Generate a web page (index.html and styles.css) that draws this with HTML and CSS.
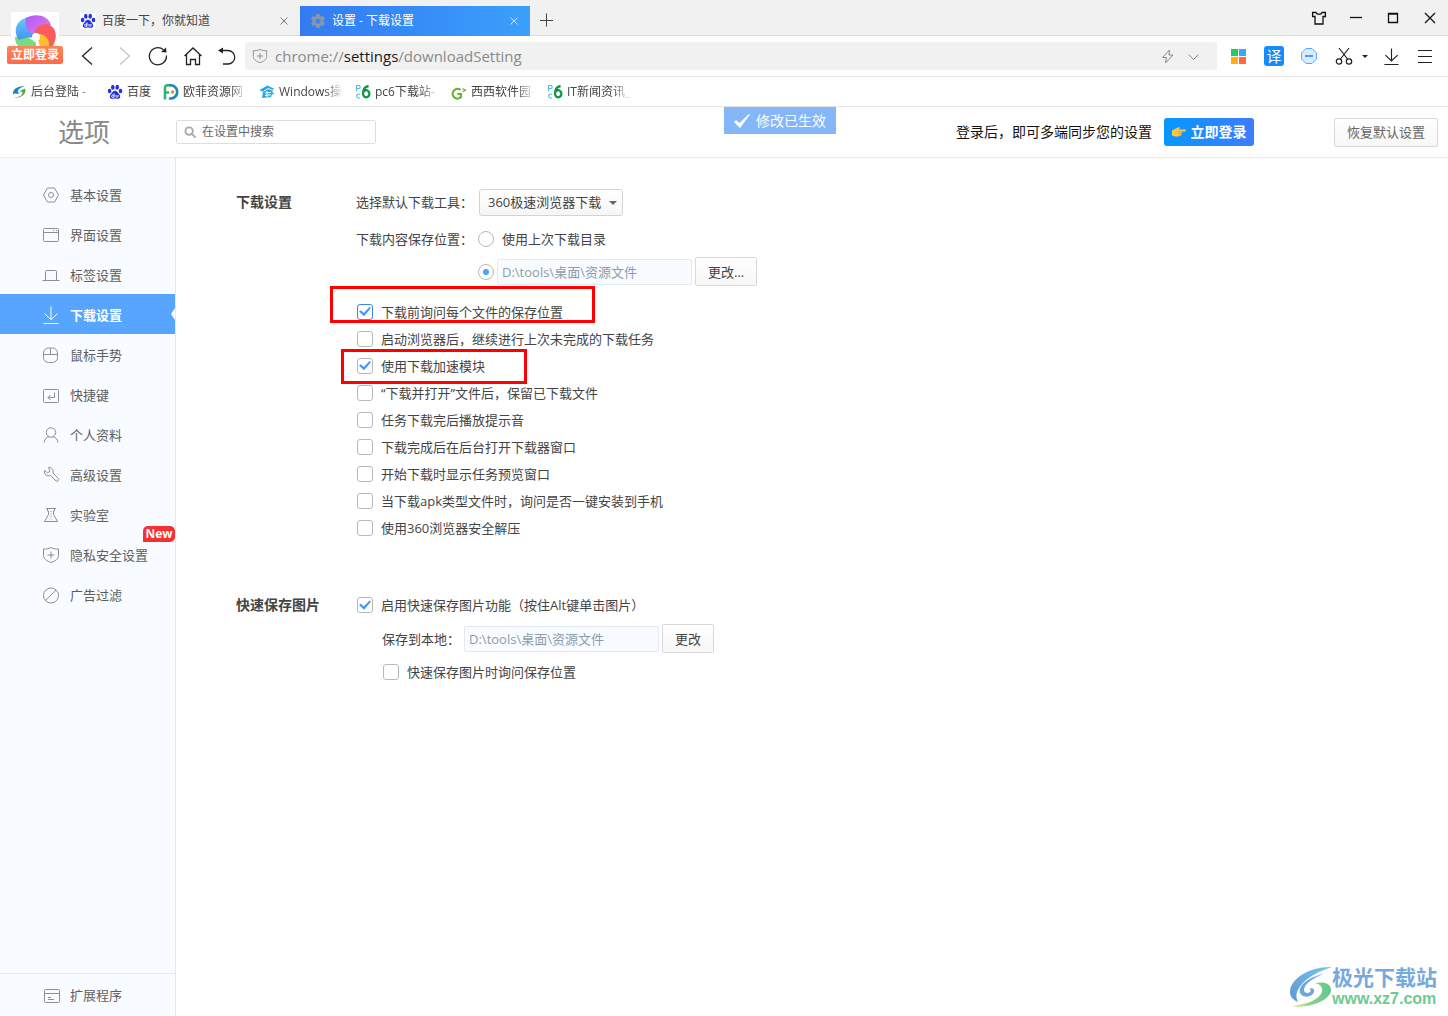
FILE: index.html
```html
<!DOCTYPE html>
<html lang="zh-CN">
<head>
<meta charset="utf-8">
<title>设置 - 下载设置</title>
<link rel="stylesheet" href="styles.css">
</head>
<body>
<svg class="sprite" aria-hidden="true">
  <symbol id="paw" viewBox="0 0 16 16">
    <g fill="#2433dc"><ellipse cx="2.6" cy="7" rx="1.8" ry="2.3"/><ellipse cx="5.8" cy="3.2" rx="1.8" ry="2.5"/><ellipse cx="10.2" cy="3.2" rx="1.8" ry="2.5" transform="rotate(8 10.2 3.2)"/><ellipse cx="13.5" cy="7" rx="1.8" ry="2.3"/><path d="M8 6.800c2 0 2.600 1.800 4 3.200 1.800 1.700 1.600 4.700-1 4.800-1.300 0-1.800-.3-3-.3s-1.700.3-3 .3c-2.600-.1-2.800-3.100-1-4.800C5.400 8.600 6 6.800 8 6.800z"/></g>
    <path d="M7 9.500v3.800M7 11.200H5.300c-.9 0-.9 2.100 0 2.100H7M9 11v1.600c0 .9 2 .9 2 0V11" fill="none" stroke="#fff"/>
  </symbol>
  <symbol id="pc6" viewBox="0 0 16 16">
    <path d="M1.500 7V1.500h2.200a1.500 1.500 0 0 1 0 3H1.500M5 10.600a2 2 0 1 0 0 3" fill="none" stroke="#4fb8e8" stroke-width="1.100"/>
    <path d="M13.600 2C10 2.600 8 5.500 8 10a3.200 3.500 0 1 0 .4-2" fill="none" stroke="#12983c" stroke-width="2.300"/>
  </symbol>
  <symbol id="shield" viewBox="0 0 18 18">
    <path d="M9 1.500c2 1.300 4.500 1.700 7.500 1.500v6.500c0 3.500-3.500 5.700-7.500 7-4-1.300-7.500-3.500-7.500-7V3C4.500 3.200 7 2.800 9 1.500zM5.500 9h7M9 5.500v7"/>
  </symbol>
  <symbol id="down" viewBox="0 0 18 18">
    <path d="M9 .5v13M2.500 7.500 9 13.700l6.500-6.200M1.500 17.500h15"/>
  </symbol>
</svg>

<header class="browser">
  <div class="tabstrip">
    <div class="tab">
      <svg class="favicon favicon-plate"><use href="#paw"/></svg>
      <span class="tab-title">百度一下，你就知道</span>
      <button class="tab-close" aria-label="关闭标签"><svg viewBox="0 0 8 8"><path d="M.5.5l7 7m0-7-7 7"/></svg></button>
    </div>
    <div class="tab tab-active">
      <svg class="favicon" viewBox="0 0 16 16"><g stroke="#8c96a3" stroke-width="3.600"><path d="M8 1v14M1.900 4.500l12.200 7M14.100 4.500l-12.200 7"/></g><circle cx="8" cy="8" r="4.100" fill="#3689f7" stroke="#8c96a3" stroke-width="3"/></svg>
      <span class="tab-title">设置 - 下载设置</span>
      <button class="tab-close" aria-label="关闭标签"><svg viewBox="0 0 8 8"><path d="M.5.5l7 7m0-7-7 7"/></svg></button>
    </div>
    <button class="new-tab" aria-label="新建标签"><svg viewBox="0 0 14 14"><path d="M6.500 .5v13M0 7.500h13"/></svg></button>
    <div class="window-controls">
      <button aria-label="皮肤"><svg viewBox="0 0 16 16"><path d="M5 2.500H1.600v4H4v7.500h8V6.500h2.400v-4H11C10 5 6 5 5 2.500z"/></svg></button>
      <button aria-label="最小化"><svg viewBox="0 0 16 16"><path d="M2 7.500h12"/></svg></button>
      <button aria-label="最大化"><svg viewBox="0 0 16 16"><path d="M3.500 3.500h9v9h-9zM3 4.200h10"/></svg></button>
      <button aria-label="关闭"><svg viewBox="0 0 16 16"><path d="m3 3 10 10M13 3 3 13"/></svg></button>
    </div>
  </div>

  <div class="toolbar">
    <nav class="nav-buttons">
      <button aria-label="后退"><svg viewBox="0 0 20 20"><path d="M15 1.500 5.500 10 15 18.500"/></svg></button>
      <button class="is-disabled" aria-label="前进"><svg viewBox="0 0 20 20"><path d="M8 1.500 17.500 10 8 18.500"/></svg></button>
      <button aria-label="刷新"><svg viewBox="0 0 20 20"><path d="M19.500 9.500A8.600 8.600 0 1 1 16.500 3.700"/><path class="solid" d="m14 6 5.500.5-.5-5z"/></svg></button>
      <button aria-label="主页"><svg viewBox="0 0 20 20"><path d="M2.500 10 11 2l8.500 8M4.500 8.500v10h4v-5h5v5h4v-10"/></svg></button>
      <button aria-label="恢复"><svg viewBox="0 0 20 20"><path d="M3 4.500h8a6.700 6.700 0 0 1 0 13.500H6"/><path class="solid" d="M6 1.500v6L1 4.500z"/></svg></button>
    </nav>
    <div class="address">
      <svg class="address-shield"><use href="#shield"/></svg>
      <div class="url" role="textbox" aria-label="地址栏" contenteditable="true" spellcheck="false">chrome://<span class="url-host">settings</span>/downloadSetting</div>
      <button aria-label="极速模式"><svg viewBox="0 0 16 16"><path d="M9.500 2 2.500 9.500h4L5.500 15l7.500-8H9z"/></svg></button>
      <button aria-label="展开"><svg viewBox="0 0 16 16"><path d="m2.500 6.500 5 5 5-5"/></svg></button>
    </div>
    <div class="extensions">
      <button aria-label="应用"><svg viewBox="0 0 20 20"><path d="M2 3h7v7H2z" fill="#23cb68"/><path d="M10 3h7v7h-7z" fill="#3ba4fb"/><path d="M2 11h7v7H2z" fill="#ffae18"/><path d="M10 11h7v7h-7z" fill="#ff6842"/></svg></button>
      <button class="translate" aria-label="翻译">译</button>
      <button aria-label="拦截"><svg viewBox="0 0 20 20"><path d="M7 2.500h6L17.500 7v6L13 17.500H7L2.500 13V7z" fill="#d9ecff" stroke="#5aa7f5"/><path d="M6 10h8" stroke="#4f9ff2" stroke-width="2"/></svg></button>
      <button class="scissors" aria-label="截图"><svg class="line" viewBox="0 0 20 20"><path d="M15 2 6.500 13M5 2l8.500 11"/><circle cx="5" cy="15.500" r="2.700"/><circle cx="15" cy="15.500" r="2.700"/></svg><span class="caret"></span></button>
      <button aria-label="下载"><svg class="line"><use href="#down"/></svg></button>
      <button aria-label="菜单"><svg class="line" viewBox="0 0 20 20"><path d="M3 4.500h14M3 10.500h14M3 16.500h14"/></svg></button>
    </div>
  </div>

  <nav class="bookmarks">
    <a href="#"><svg viewBox="0 0 16 16"><path d="M13.500 2C6 2 1 6 2 10.500 4 8 5.500 11 9 9 6 9 5.500 5 13.500 2z" fill="#1c86c8"/><path d="M14 4.500c2 5-3 9.500-11 9.500 4-1 8-2 8.500-5 .2-1.500-2-1.500-3-1 1-2 3.500-2.500 5.500-3.500z" fill="#4cae3e"/></svg><span class="long">后台登陆 -</span></a>
    <a href="#"><svg><use href="#paw"/></svg><span>百度</span></a>
    <a href="#"><svg viewBox="0 0 16 16"><path d="M2 15.500V3.500C2 1.500 4 1 7 1M2 8.500h4" fill="none" stroke="#2fb56f" stroke-width="2.600"/><path d="M6 1.500A6.600 6.600 0 1 1 6 14.300" fill="none" stroke="#1e86bf" stroke-width="2.600"/><circle cx="9.500" cy="8" r="1.700" fill="#f58a24"/></svg><span class="long">欧菲资源网</span></a>
    <a href="#"><svg viewBox="0 0 16 16"><path d="m.5 6 8-4.500 7 3.500-2 .5v3l2 1-2.500 1L12 13l-9 1 1-6z" fill="#27a7e5"/><path d="M4.500 7.500 9 4.500l4 1.500M6 9l6-.5M6 11.500l6-.7M8 7v6" fill="none" stroke="#fff"/></svg><span class="long">Windows操</span></a>
    <a href="#"><svg><use href="#pc6"/></svg><span class="long">pc6下载站-</span></a>
    <a href="#"><svg viewBox="0 0 16 16"><path d="M9.500 6A4.800 4.800 0 1 0 10 13V10H6.500" fill="none" stroke="#68b32d" stroke-width="2.200"/><path d="m11.500 4.500 3 1.700-3 1.500" fill="none" stroke="#68b32d" stroke-width="1.200"/></svg><span class="long">西西软件园-</span></a>
    <a href="#"><svg><use href="#pc6"/></svg><span class="long">IT新闻资讯_</span></a>
  </nav>

  <div class="account">
    <svg viewBox="0 0 48 34" aria-hidden="true">
      <defs>
        <linearGradient id="petal-blue" x2="0" y2="1"><stop stop-color="#65cbfb"/><stop offset="1" stop-color="#4592f4"/></linearGradient>
        <linearGradient id="petal-purple" y2="1"><stop stop-color="#a95bf6"/><stop offset="1" stop-color="#ef79ef"/></linearGradient>
      </defs>
      <path fill="#fff" d="M0 0h48v34H0z"/>
      <path d="M4 25c7-2 15 0 21 6v3H7c-2-3-3-5-3-9z" fill="#74dc83"/>
      <path d="M18 5C6 7 1 18 8 28c5-2 9-3 16-2l-5-12z" fill="url(#petal-blue)"/>
      <path d="M15 6C24 1 37 3 40 13c-7 0-12 4-15 10C17 21 13 14 15 6z" fill="url(#petal-purple)"/>
      <path d="M23 21c3-9 14-13 20-4 3 5 2 11-1 17h-5c-1-8-7-13-14-13z" fill="#f95b5f"/>
      <path d="M25 22c9-1 14 5 13 12H29z" fill="#ffbd2b"/>
      <circle cx="25" cy="25" r="4" fill="#fff"/>
    </svg>
    <button>立即登录</button>
  </div>
</header>

<section class="page-head">
  <h1>选项</h1>
  <label class="search">
    <svg viewBox="0 0 14 14"><circle cx="5.500" cy="5.500" r="4"/><path d="m8.500 8.500 4 4"/></svg>
    <input type="search" placeholder="在设置中搜索" aria-label="在设置中搜索">
  </label>
  <div class="toast" role="status"><svg viewBox="0 0 16 16"><path d="M0 9l2-2 3.500 3L15 1l1 .500L6 15z"/></svg>修改已生效</div>
  <div class="sync">
    <span>登录后，即可多端同步您的设置</span>
    <button class="login"><svg viewBox="0 0 14 12"><path d="M0 4.500 4 2.500 7 1l1 1-1.500 1.500H13c1.300 0 1.300 2 0 2H9.500c.8.5.7 1.300 0 1.500.4.600.2 1.200-.3 1.400.3.700-.2 1.400-1 1.400L6 10.500H3L0 9.500z" fill="#ffc83d"/><path d="M6.500 5.500h3M6.500 7.300h3M6.500 9H9" stroke="#d9902a" stroke-width=".7"/></svg>立即登录</button>
  </div>
  <button class="button restore">恢复默认设置</button>
</section>

<div class="body">
  <aside class="sidebar">
    <nav>
      <a href="#"><svg viewBox="0 0 18 18"><path d="M5.500 2h7l4 7-4 7h-7l-4-7z"/><circle cx="9" cy="9" r="2.500"/></svg>基本设置</a>
      <a href="#"><svg viewBox="0 0 18 18"><rect x="1.500" y="2.500" width="15" height="13" rx="1"/><path d="M2 6.500h14M11 4.500h1M14 4.500h1"/></svg>界面设置</a>
      <a href="#"><svg viewBox="0 0 18 18"><path d="M.5 14.500h17M3.500 14V5.500c0-.7.3-1 1-1h9c.7 0 1 .3 1 1V14"/></svg>标签设置</a>
      <a href="#" class="current" aria-current="page"><svg><use href="#down"/></svg>下载设置</a>
      <a href="#"><svg viewBox="0 0 18 18"><rect x="1.500" y="2" width="14" height="14.500" rx="5"/><path d="M2 8.500h13M8.500 2.500v6"/></svg>鼠标手势</a>
      <a href="#"><svg viewBox="0 0 18 18"><rect x="1.500" y="3.500" width="15" height="13" rx="1"/><path d="M12.500 6.500v5H6M8.500 9 6 11.500 8.500 14"/></svg>快捷键</a>
      <a href="#"><svg viewBox="0 0 18 18"><circle cx="9" cy="6.500" r="4.700"/><path d="M2 16.500c.5-3.500 2.500-5.300 5-5.700M16 16.500c-.5-3.500-2.500-5.300-5-5.700"/></svg>个人资料</a>
      <a href="#"><svg viewBox="0 0 18 18"><path d="M2.500 4.500 5.500 7 8 5 6.500 1.500c3-.5 5.500 2.500 4.500 5.500l5.500 5.500c1 1.500-1 3.500-2.500 2.500L8.500 9.500C5 11 1.500 8 2.500 4.500zM14 13v.5"/></svg>高级设置</a>
      <a href="#"><svg viewBox="0 0 18 18"><path d="M4 2.500h10M5.500 2.500V5h1v3.500L2.500 15.500h13L11.500 8.500V5h1V2.500"/><path d="M9 5v9" stroke-dasharray="1 1.500"/></svg>实验室</a>
      <a href="#"><svg><use href="#shield"/></svg>隐私安全设置<span class="badge">New</span></a>
      <a href="#"><svg viewBox="0 0 18 18"><circle cx="9" cy="9.500" r="7.500"/><path d="M3.500 14.500 14 4"/></svg>广告过滤</a>
    </nav>
    <nav class="sidebar-foot">
      <a href="#"><svg viewBox="0 0 18 18"><rect x="2.500" y="3.500" width="15" height="13" rx="1"/><path d="M3 7.500h14M6 11.500h3M6 13.500h6"/></svg>扩展程序</a>
    </nav>
  </aside>

  <main>
    <section class="group">
      <h2>下载设置</h2>
      <div class="fields">
        <div class="row row-tool">
          <label class="caption" for="tool">选择默认下载工具：</label>
          <span class="select"><select id="tool"><option>360极速浏览器下载</option></select></span>
        </div>
        <div class="row row-last">
          <span class="caption">下载内容保存位置：</span>
          <input type="radio" name="place" id="place-last"><label for="place-last">使用上次下载目录</label>
        </div>
        <div class="row row-path">
          <input type="radio" name="place" aria-label="指定目录" checked>
          <input type="text" class="path" value="D:\tools\桌面\资源文件" aria-label="下载目录" readonly>
          <button class="button">更改...</button>
        </div>
        <ul class="checks">
          <li><label><input type="checkbox" class="focused" checked>下载前询问每个文件的保存位置</label><span class="mark mark-ask"></span></li>
          <li><label><input type="checkbox">启动浏览器后，继续进行上次未完成的下载任务</label></li>
          <li><label><input type="checkbox" checked>使用下载加速模块</label><span class="mark mark-boost"></span></li>
          <li><label><input type="checkbox">“下载并打开”文件后，保留已下载文件</label></li>
          <li><label><input type="checkbox">任务下载完后播放提示音</label></li>
          <li><label><input type="checkbox">下载完成后在后台打开下载器窗口</label></li>
          <li><label><input type="checkbox">开始下载时显示任务预览窗口</label></li>
          <li><label><input type="checkbox">当下载apk类型文件时，询问是否一键安装到手机</label></li>
          <li><label><input type="checkbox">使用360浏览器安全解压</label></li>
        </ul>
      </div>
    </section>

    <section class="group">
      <h2>快速保存图片</h2>
      <div class="fields">
        <div class="row"><label><input type="checkbox" checked>启用快速保存图片功能（按住Alt键单击图片）</label></div>
        <div class="row row-sub">
          <label for="local">保存到本地：</label>
          <input type="text" class="path" id="local" value="D:\tools\桌面\资源文件" readonly>
          <button class="button">更改</button>
        </div>
        <div class="row row-sub"><label><input type="checkbox">快速保存图片时询问保存位置</label></div>
      </div>
    </section>
  </main>

  <div class="watermark">
    <svg viewBox="0 0 42 42" aria-hidden="true">
      <defs>
        <linearGradient id="swirl-top" x1="0" y1="1" x2="1" y2="0"><stop stop-color="#5e96d8"/><stop offset="1" stop-color="#79c4ea"/></linearGradient>
        <linearGradient id="swirl-bottom"><stop stop-color="#e6ea72"/><stop offset=".6" stop-color="#7fd08c"/><stop offset="1" stop-color="#62c98b"/></linearGradient>
      </defs>
      <path d="M42 1C20 0-1 13 0 27c.5 4 3 7 8 9C2 25 14 10 42 1z" fill="url(#swirl-top)"/>
      <path d="M34 8C19 11 8 19 10 27c2 5 12 5 14-1 1-3-2-5-5-3 2 0 2 2 1 3-2 2-6 1-6-2 0-6 9-12 20-16z" fill="#6fa6de"/>
      <path d="M25 17c10-2 17 1 16 8C39 35 18 43 1 40c14-1 28-6 31-14 1-5-2-8-7-9z" fill="url(#swirl-bottom)"/>
    </svg>
    <div><b>极光下载站</b><span>www.xz7.com</span></div>
  </div>
</div>
</body>
</html>
```
FILE: styles.css
```css
* { box-sizing: border-box; }

body {
  margin: 0;
  min-height: 100vh;
  display: flex;
  flex-direction: column;
  background: #fff;
  color: #444;
  font: 13px/20px "Open Sans", "Noto Sans CJK SC", sans-serif;
}

button, input, select { font: inherit; color: inherit; margin: 0; }
button { padding: 0; border: 0; background: none; white-space: nowrap; }
a { color: inherit; text-decoration: none; }
h1, h2, ul { margin: 0; padding: 0; list-style: none; }
svg { display: block; flex: none; fill: none; stroke: none; }
.sprite { position: absolute; width: 0; height: 0; }

/* Browser chrome */
.browser { position: relative; }

.tabstrip {
  display: flex;
  align-items: flex-end;
  height: 36px;
  padding-left: 70px;
  background: #f1f1f1;
  border-bottom: 1px solid #dcdcdc;
}
.tab {
  display: flex;
  align-items: center;
  width: 230px;
  height: 30px;
  margin-bottom: -1px;
  padding: 0 12px 0 10px;
  gap: 6px;
  font-size: 12px;
}
.favicon { width: 16px; height: 16px; }
.favicon-plate { background: #fff; }
.tab-title { flex: 1; }
.tab-active { color: #fff; background: linear-gradient(90deg, #347bf2, #368cf7 50%, #3ba0fb); }
.tab-close svg { width: 8px; height: 8px; stroke: #777; }
.tab-active .tab-close svg { stroke: #cfe4ff; }
.new-tab { padding: 8px 10px; }
.new-tab svg { width: 14px; height: 14px; stroke: #444; }
.window-controls { display: flex; align-self: center; gap: 21px; margin-left: auto; padding-right: 10px; }
.window-controls svg { width: 16px; height: 16px; stroke: #111; stroke-width: 1.3; }

.toolbar { display: flex; align-items: center; height: 41px; padding: 0 13px 0 77px; border-bottom: 1px solid #e5e5e5; }
.nav-buttons { display: flex; gap: 15px; padding-right: 8px; }
.nav-buttons svg { width: 20px; height: 20px; stroke: #222; stroke-width: 1.3; }
.nav-buttons .solid { fill: #222; stroke: none; }
.nav-buttons .is-disabled svg { stroke: #c4c4c4; }
.address {
  display: flex;
  align-items: center;
  flex: 1;
  gap: 10px;
  height: 28px;
  padding: 0 15px 0 7px;
  border-radius: 2px;
  background: #f1f1f1;
}
.address svg { width: 16px; height: 16px; stroke: #888; }
.address-shield { margin-right: -3px; }
.url { flex: 1; color: #8a8a8a; font-size: 15px; outline: 0; }
.url-host { color: #1a1a1a; }
.extensions { display: flex; align-items: center; gap: 15px; padding-left: 12px; }
.extensions svg { width: 20px; height: 20px; }
.extensions .line { stroke: #222; stroke-width: 1.2; }
.extensions button:nth-child(5) .line { width: 17px; height: 17px; }
.translate { width: 20px; height: 20px; border-radius: 3px; background: #168bfa; color: #fff; font-size: 15px; }
.scissors { display: flex; align-items: center; gap: 8px; }
.caret { border: 3px solid transparent; border-top-color: #222; border-bottom: 0; }

.bookmarks { display: flex; align-items: center; gap: 12px; height: 30px; padding: 0 11px; border-bottom: 1px solid #e5e5e5; font-size: 12px; }
.bookmarks a { display: flex; align-items: center; gap: 4px; }
.bookmarks svg { width: 16px; height: 16px; }
.bookmarks .long { width: 64px; overflow: hidden; white-space: nowrap; -webkit-mask-image: linear-gradient(90deg, #000 72%, transparent); mask-image: linear-gradient(90deg, #000 72%, transparent); }

.account { position: absolute; top: 12px; left: 7px; width: 56px; }
.account svg { width: 48px; height: 34px; margin: 0 auto; }
.account button { display: block; width: 100%; height: 18px; border-radius: 2px; background: linear-gradient(#ff8358, #fb6c4a); color: #fff; font-size: 12px; font-weight: 700; line-height: 18px; }

/* Settings header */
.page-head { position: relative; display: flex; align-items: center; height: 51px; padding-right: 10px; border-bottom: 1px solid #ebebeb; }
h1 { width: 176px; padding-left: 58px; color: #888; font-size: 26px; font-weight: 400; line-height: 36px; }
.search { display: flex; align-items: center; width: 200px; height: 24px; padding: 0 7px; gap: 5px; border: 1px solid #dedede; border-radius: 2px; }
.search svg { width: 13px; height: 13px; stroke: #aaa; stroke-width: 2; }
.search input { flex: 1; min-width: 0; padding: 0; border: 0; background: none; outline: 0; font-size: 12px; }
.search input::placeholder { color: #666; opacity: 1; }
.toast { position: absolute; top: 0; left: 50%; display: flex; align-items: center; gap: 6px; height: 27px; padding: 0 10px; background: #85b6fa; color: #fff; font-size: 14px; }
.toast svg { width: 16px; height: 16px; fill: #fff; }
.sync { display: flex; align-items: center; gap: 12px; margin-left: auto; color: #111; font-size: 14px; }
.login { display: flex; align-items: center; justify-content: center; gap: 5px; width: 90px; height: 28px; border-radius: 3px; background: linear-gradient(90deg, #0798ff, #3e7bff); color: #fff; font-weight: 700; }
.login svg { width: 14px; height: 12px; }
.button { height: 29px; padding: 0 12px; border: 1px solid #d8d8d8; border-radius: 2px; background: linear-gradient(#fff, #f7f7f7); }
.restore { width: 104px; margin-left: 80px; color: #666; }

/* Body */
.body { position: relative; display: flex; flex: 1; }
.sidebar { display: flex; flex-direction: column; width: 176px; padding-top: 16px; border-right: 1px solid #e4e9f0; background: #f8fbff; color: #5e5e5e; }
.sidebar a { position: relative; display: flex; align-items: center; height: 40px; padding: 2px 0 0 42px; gap: 10px; }
.sidebar svg { width: 18px; height: 18px; stroke: #8e8e8e; }
.sidebar .current { background: #57a5ff; color: #fff; font-weight: 700; }
.sidebar .current svg { stroke: #fff; }
.sidebar .current::after { content: ""; position: absolute; right: 0; top: 14px; border: 6px solid transparent; border-right: 4px solid #fff; border-left: 0; }
.badge { position: absolute; top: -8px; right: 0; width: 32px; height: 16px; border-radius: 5px 5px 5px 0; background: #f6312f; color: #fff; font-size: 12px; font-weight: 700; line-height: 16px; text-align: center; }
.sidebar-foot { margin-top: auto; padding-bottom: 2px; border-top: 1px solid #e4e9f0; }

main { flex: 1; padding: 30px 60px; }
.group { display: flex; margin-bottom: 50px; }
h2 { width: 120px; font-size: 14px; font-weight: 700; line-height: 28px; }
.row { display: flex; align-items: center; height: 33px; }
.caption { width: 123px; white-space: nowrap; }
.row-tool { height: 28px; margin-bottom: 7px; }
.row-last { gap: 8px; height: 32px; }
.row-last .caption { width: 114px; }
.row-path { gap: 3px; height: 33px; margin-bottom: 10px; padding-left: 122px; }
.row-sub { padding-left: 26px; }
.row-sub .path { margin: 0 3px 0 4px; }
.group:last-of-type .row:first-child { height: 28px; margin-bottom: 3px; }

.select { position: relative; }
.select::after { content: ""; position: absolute; right: 6px; top: 12px; border: 4px solid transparent; border-top-color: #666; border-bottom: 0; }
select { display: block; width: 144px; height: 27px; padding: 0 8px; border: 1px solid #d4d4d4; border-radius: 3px; background: linear-gradient(#fff, #f6f6f6); appearance: none; }
.path { width: 195px; height: 26px; padding: 0 4px; border: 1px solid #e1e9f3; border-radius: 2px; background: #f8fbff; color: #8e9baa; outline: 0; }

input[type="radio"], input[type="checkbox"] { flex: none; display: grid; place-items: center; width: 16px; height: 16px; border: 1px solid #b8b8b8; border-radius: 3px; background: #fff; appearance: none; }
input[type="radio"] { border-radius: 50%; }
input[type="radio"]:checked::after { content: ""; width: 6px; height: 6px; border-radius: 50%; background: #4c9ffb; }
input[type="checkbox"]:checked::after { content: ""; width: 12px; height: 10px; background: #4296f8; clip-path: polygon(0 50%, 15% 38%, 40% 66%, 88% 4%, 100% 14%, 42% 98%); }
input[type="checkbox"].focused { border-color: #3f87ee; }
label > input[type="checkbox"] { margin: 0 8px 0 1px; }
.checks li { position: relative; height: 27px; display: flex; align-items: center; }
.row > label, .checks label { display: flex; align-items: center; white-space: nowrap; }
.mark { position: absolute; border: 3px solid #f00; pointer-events: none; }
.mark-ask { top: -12px; left: -26px; width: 265px; height: 37px; }
.mark-boost { top: -3px; left: -15px; width: 186px; height: 35px; }

.watermark { position: absolute; right: 11px; bottom: 7px; display: flex; align-items: center; }
.watermark svg { width: 42px; height: 42px; }
.watermark div { display: flex; flex-direction: column; }
.watermark b { color: #76a9df; font-size: 21px; font-weight: 700; line-height: 24px; }
.watermark span { color: #6dcb8d; font: 700 16px/20px "Liberation Sans", sans-serif; }
```
